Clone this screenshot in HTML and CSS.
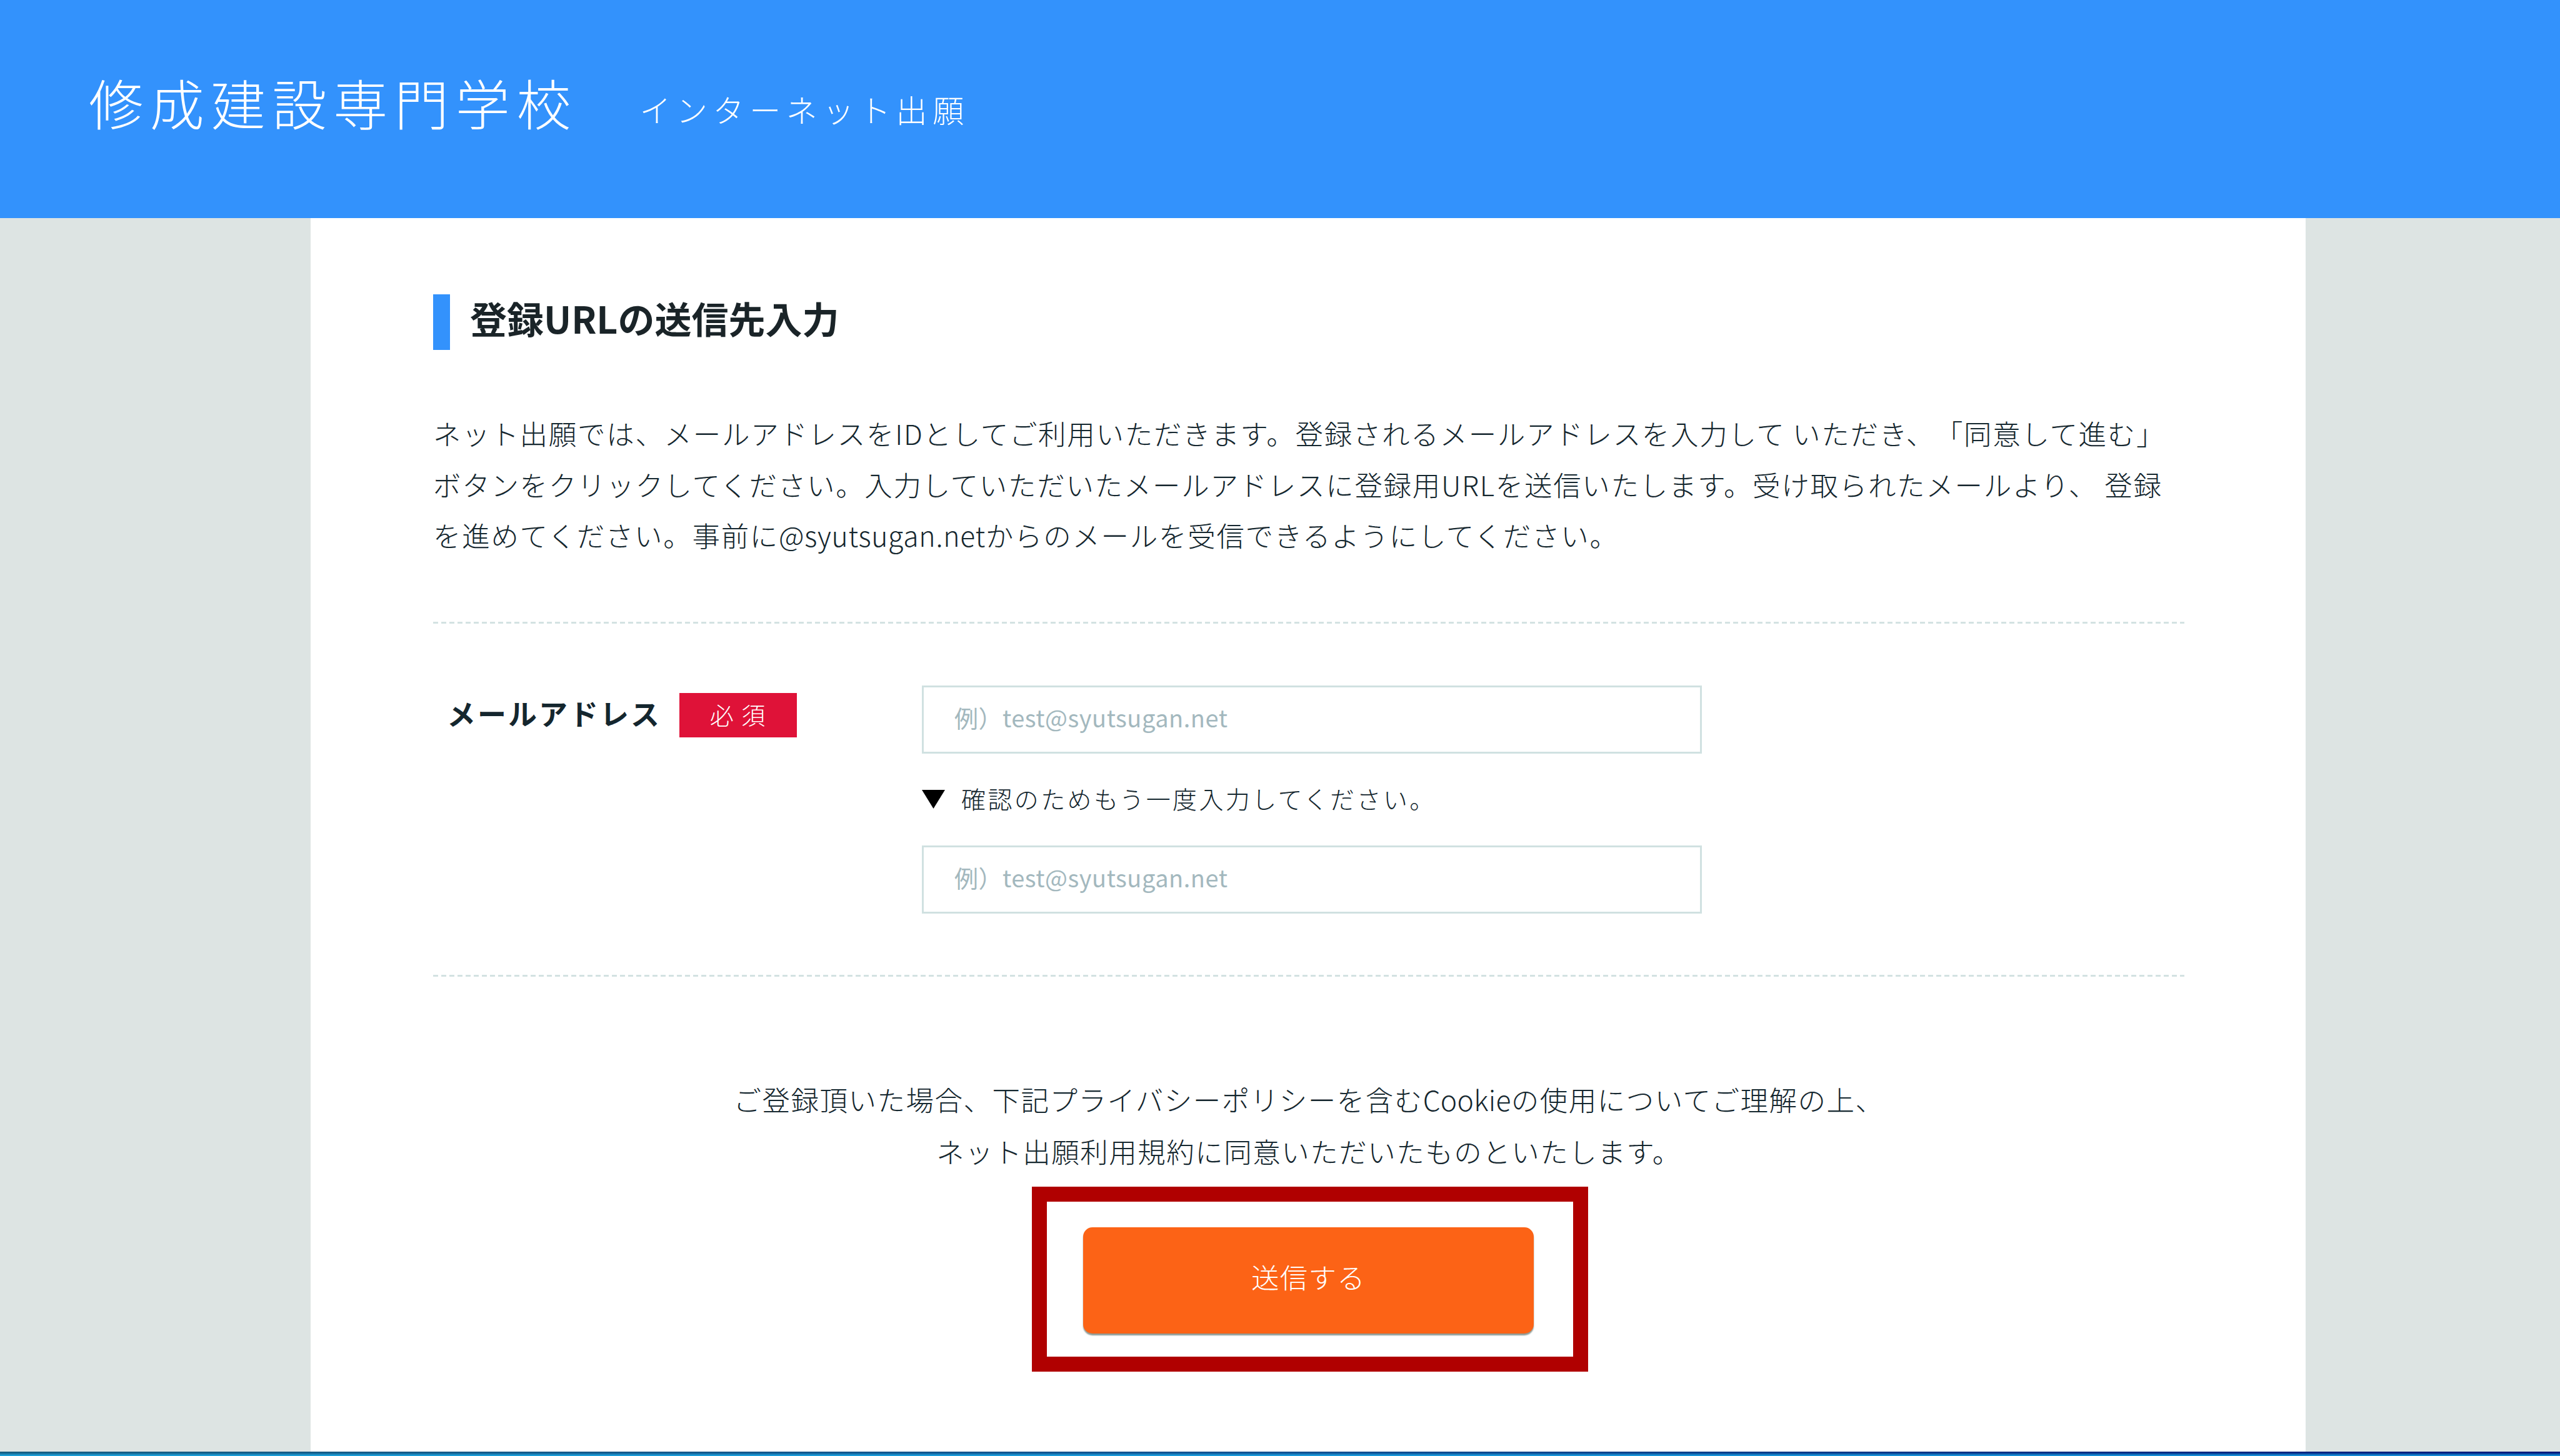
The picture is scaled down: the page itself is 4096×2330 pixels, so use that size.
FILE: index.html
```html
<!DOCTYPE html>
<html lang="ja">
<head>
  <meta charset="UTF-8">
  <title>修成建設専門学校 インターネット出願</title>
  <link rel="stylesheet" href="styles.css">
</head>
<body>
  <header class="header">
    <h1 class="school">修成建設専門学校</h1>
    <p class="service">インターネット出願</p>
  </header>

  <main class="container">
    <h2 class="title">登録URLの送信先入力</h2>

    <p class="lead">
      ネット出願では、メールアドレスをIDとしてご利用いただきます。登録されるメールアドレスを入力して いただき、「同意して進む」<br>
      ボタンをクリックしてください。入力していただいたメールアドレスに登録用URLを送信いたします。受け取られたメールより、 登録<br>
      を進めてください。事前に<span class="domain">@syutsugan.net</span>からのメールを受信できるようにしてください。
    </p>

    <form class="form">
      <div class="row">
        <div class="label">
          <label for="mail">メールアドレス</label>
          <span class="required">必 須</span>
        </div>
        <div class="fields">
          <input type="text" id="mail" placeholder="例）test@syutsugan.net">
          <p class="confirm"><span class="arrow"></span><span class="confirm-text">確認のためもう一度入力してください。</span></p>
          <input type="text" id="mail2" placeholder="例）test@syutsugan.net">
        </div>
      </div>

      <p class="agree">
        ご登録頂いた場合、下記プライバシーポリシーを含む<span class="cookie">Cookie</span>の使用についてご理解の上、<br>
        ネット出願利用規約に同意いただいたものといたします。
      </p>

      <div class="submit">
        <button type="button">送信する</button>
      </div>
    </form>
  </main>

  <div class="taskbar"></div>
</body>
</html>
```
FILE: styles.css
```css
* {
  box-sizing: border-box;
}
body {
  margin: 0;
  height: 2330px;
  display: flex;
  flex-direction: column;
  overflow: hidden;
  background: #dde4e3;
  color: #14262e;
  font-family: "Noto Sans CJK JP", sans-serif;
  font-weight: 300;
  text-spacing-trim: space-all;
}
h1, h2, p {
  margin: 0;
  font-weight: 300;
}

/* header */
.header {
  display: flex;
  flex: none;
  height: 349px;
  padding: 0 0 23px 142px;
  align-items: center;
  gap: 99px;
  background: #3392fc;
  color: #fff;
}
.school {
  font-size: 87px;
  letter-spacing: 10.8px;
  line-height: 130px;
}
.service {
  font-size: 50px;
  letter-spacing: 8.6px;
  line-height: 74px;
  padding-top: 22px;
}

/* main */
.container {
  flex: 1;
  width: 3192px;
  margin-left: 497px;
  padding: 122px 194px 0 196px;
  background: #fff;
}
.title {
  height: 89px;
  padding-left: 32px;
  border-left: 27px solid #3392fc;
  font-size: 59px;
  font-weight: 700;
  line-height: 76px;
  color: #1a2428;
}
.lead {
  margin-top: 92px;
  padding-bottom: 98px;
  font-size: 44.5px;
  letter-spacing: 1.7px;
  line-height: 81.5px;
  white-space: nowrap;
}
.domain {
  letter-spacing: 0.7px;
}

/* form */
.row {
  display: flex;
  height: 568px;
  padding: 102px 0 0 22px;
  background:
    repeating-linear-gradient(90deg, #d3e2e2 0 8px, transparent 8px 13px) top / 100% 3px no-repeat,
    repeating-linear-gradient(90deg, #d3e2e2 0 8px, transparent 8px 13px) bottom / 100% 3px no-repeat;
}
.label {
  display: flex;
  width: 760px;
  gap: 30px;
  align-items: flex-start;
}
.label label {
  width: 342px;
  font-size: 46px;
  font-weight: 700;
  letter-spacing: 3px;
  line-height: 86px;
  white-space: nowrap;
}
.required {
  width: 188px;
  height: 71px;
  margin-top: 12px;
  background: #df1238;
  color: #fff;
  font-size: 38px;
  letter-spacing: 2px;
  line-height: 68px;
  text-align: center;
}
.fields input {
  display: block;
  width: 1248px;
  height: 109px;
  padding: 0 0 7px 49px;
  border: 3px solid #d0e1e1;
  border-radius: 0;
  background: #fff;
  font-family: inherit;
  font-size: 38px;
  font-weight: 400;
  letter-spacing: 0.5px;
}
.fields input::placeholder {
  color: #a3b8be;
  opacity: 1;
}
.confirm {
  display: flex;
  align-items: center;
  height: 147px;
  font-size: 39px;
  letter-spacing: 3.4px;
}
.confirm-text {
  padding-bottom: 5px;
}
.arrow {
  width: 37px;
  height: 30px;
  margin-right: 26px;
  background: #000;
  clip-path: polygon(0 0, 100% 0, 50% 100%);
}
.agree {
  margin-top: 154px;
  font-size: 44.5px;
  letter-spacing: 1.5px;
  line-height: 83px;
  text-align: center;
}
.cookie {
  letter-spacing: 0.3px;
}
.submit {
  display: flex;
  width: 890px;
  height: 296px;
  margin: 16px 0 0 958px;
  padding: 41px 0 0 58px;
  border: 24px solid #b00000;
}
.submit button {
  width: 721px;
  height: 170px;
  padding: 0 0 12px;
  border: none;
  border-radius: 15px;
  background: #fc6316;
  box-shadow: 0 3px 2px #8f9a94;
  color: #fff;
  font-family: inherit;
  font-size: 44.5px;
  font-weight: 300;
  letter-spacing: 1.3px;
}

.taskbar {
  flex: none;
  height: 7px;
  background:
    linear-gradient(transparent 20%, rgba(30, 190, 255, 0.8)),
    linear-gradient(90deg, #165c80, #104f90 50%, #001478);
}
```
